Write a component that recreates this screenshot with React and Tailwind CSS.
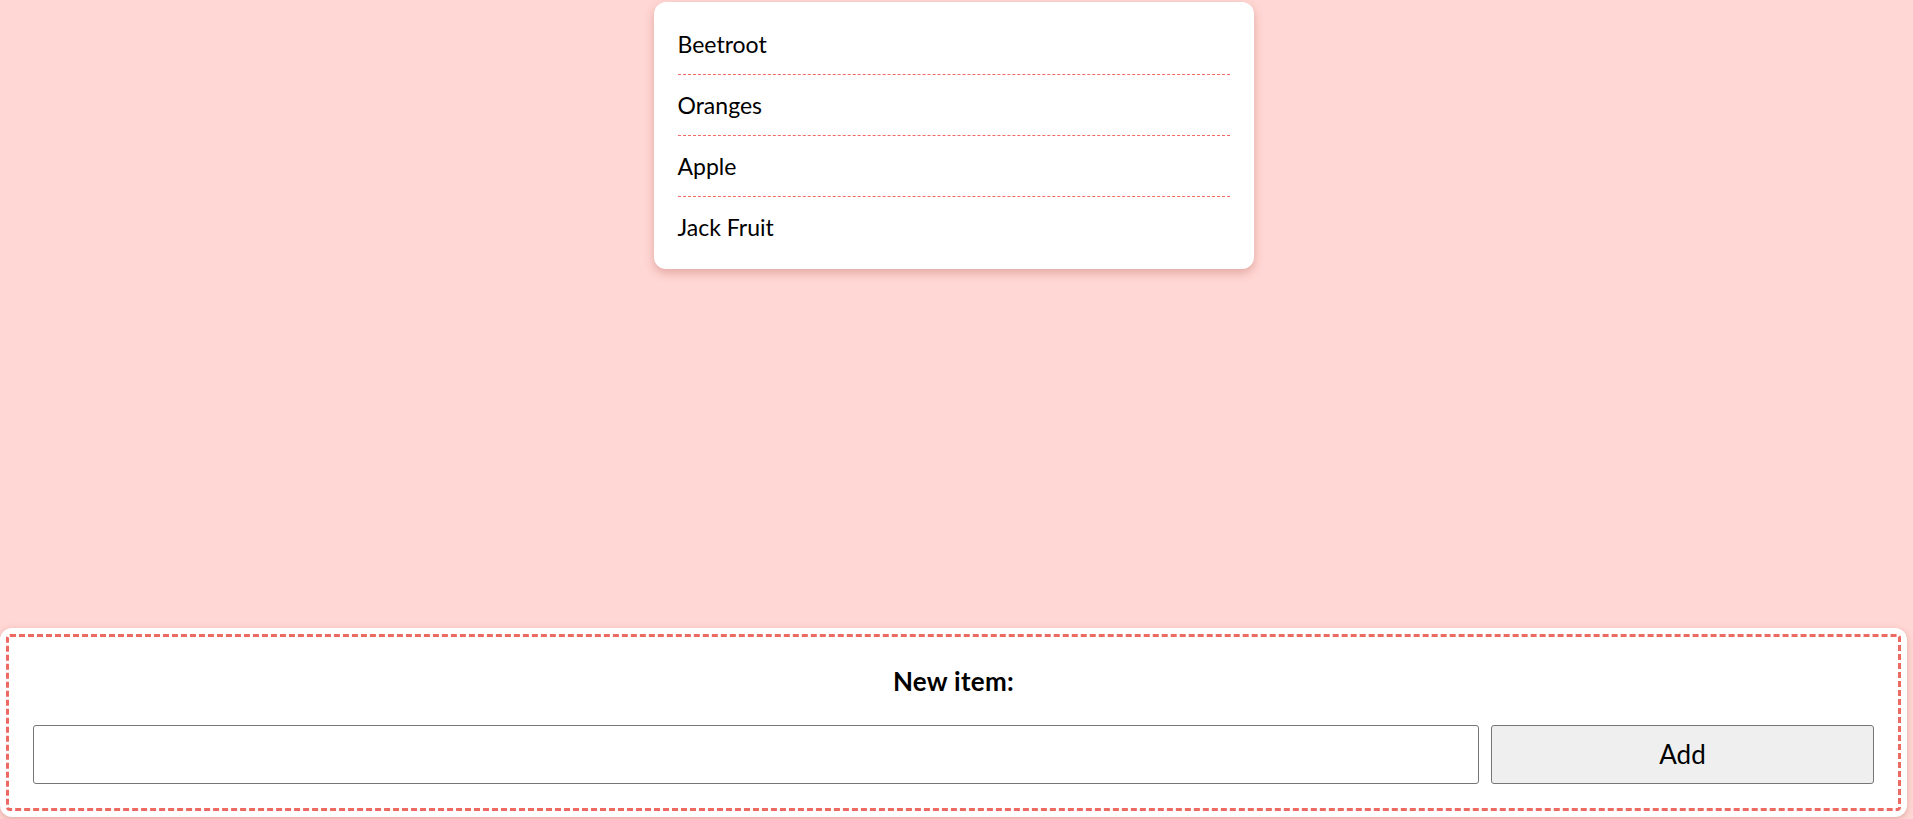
import { useState } from 'react';

export default function App() {
  const [items, setItems] = useState(['Beetroot', 'Oranges', 'Apple', 'Jack Fruit']);
  const [text, setText] = useState('');

  const addItem = (e) => {
    e.preventDefault();
    if (!text.trim()) return;
    setItems([...items, text.trim()]);
    setText('');
  };

  return (
    <div className="min-h-screen flex flex-col bg-[#ffd7d4] text-black font-['Lato','Open_Sans',sans-serif]">
      <div className="min-h-screen flex flex-col mr-[6px]">
        {/* List card */}
        <ul className="w-[600px] mx-auto mt-[2px] bg-white rounded-xl py-3 px-6 shadow-[0_4px_10px_rgba(190,110,105,0.45)]">
          {items.map((item, idx) => (
            <li
              key={idx}
              className={`py-4 text-[23px] leading-7 ${idx < items.length - 1 ? 'border-b border-dashed border-[#f26a66]' : ''}`}
            >
              {item}
            </li>
          ))}
        </ul>

        {/* New item form */}
        <form
          onSubmit={addItem}
          className="mt-auto mb-[2px] bg-white rounded-xl p-[6px] shadow-[0_2px_6px_rgba(190,110,105,0.45)]"
        >
          <div className="border-[3px] border-dashed border-[#ec6a62] rounded px-6 pt-[28px] pb-[24px]">
            <h3 className="text-center text-[26px] leading-8 font-bold tracking-[0.3px]">New item:</h3>
            <div className="flex gap-3 mt-7">
              <input
                type="text"
                value={text}
                onChange={(e) => setText(e.target.value)}
                className="flex-1 h-[59px] border border-[#767676] rounded-[3px] px-3 text-[22px] outline-none"
              />
              <button
                type="submit"
                className="w-[383px] h-[59px] bg-[#efefef] border border-[#767676] rounded-[3px] text-[26px]"
              >
                Add
              </button>
            </div>
          </div>
        </form>
      </div>
    </div>
  );
}
